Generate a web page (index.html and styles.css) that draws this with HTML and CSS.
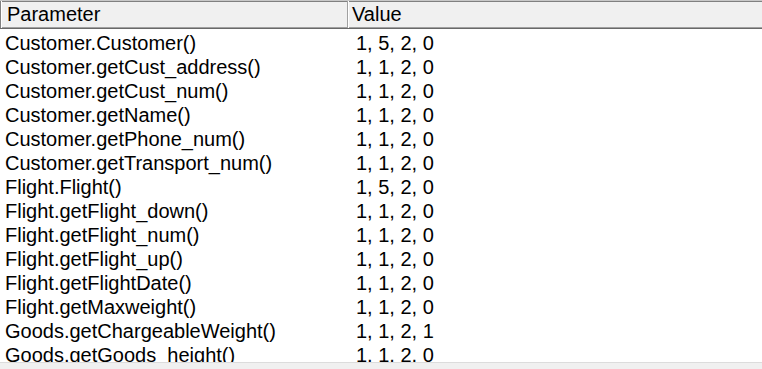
FILE: index.html
```html
<!DOCTYPE html>
<html>
<head>
<meta charset="utf-8">
<link rel="stylesheet" href="styles.css">
</head>
<body>
<div class="listview">
  <div class="header">
    <div class="hcell hcell-param">Parameter</div>
    <div class="hcell hcell-value">Value</div>
  </div>
  <div class="rows">
    <div class="row"><span class="c1">Customer.Customer()</span><span class="c2">1, 5, 2, 0</span></div>
    <div class="row"><span class="c1">Customer.getCust_address()</span><span class="c2">1, 1, 2, 0</span></div>
    <div class="row"><span class="c1">Customer.getCust_num()</span><span class="c2">1, 1, 2, 0</span></div>
    <div class="row"><span class="c1">Customer.getName()</span><span class="c2">1, 1, 2, 0</span></div>
    <div class="row"><span class="c1">Customer.getPhone_num()</span><span class="c2">1, 1, 2, 0</span></div>
    <div class="row"><span class="c1">Customer.getTransport_num()</span><span class="c2">1, 1, 2, 0</span></div>
    <div class="row"><span class="c1">Flight.Flight()</span><span class="c2">1, 5, 2, 0</span></div>
    <div class="row"><span class="c1">Flight.getFlight_down()</span><span class="c2">1, 1, 2, 0</span></div>
    <div class="row"><span class="c1">Flight.getFlight_num()</span><span class="c2">1, 1, 2, 0</span></div>
    <div class="row"><span class="c1">Flight.getFlight_up()</span><span class="c2">1, 1, 2, 0</span></div>
    <div class="row"><span class="c1">Flight.getFlightDate()</span><span class="c2">1, 1, 2, 0</span></div>
    <div class="row"><span class="c1">Flight.getMaxweight()</span><span class="c2">1, 1, 2, 0</span></div>
    <div class="row"><span class="c1">Goods.getChargeableWeight()</span><span class="c2">1, 1, 2, 1</span></div>
    <div class="row"><span class="c1">Goods.getGoods_height()</span><span class="c2">1, 1, 2, 0</span></div>
  </div>
  <div class="hscroll"></div>
</div>
</body>
</html>
```
FILE: styles.css
```css
html, body {
  margin: 0;
  padding: 0;
  background: #ffffff;
  overflow: hidden;
}
body {
  width: 762px;
  height: 369px;
  font-family: "Liberation Sans", Arial, sans-serif;
  font-size: 20px;
  color: #000000;
}
.listview {
  position: relative;
  width: 762px;
  height: 369px;
  overflow: hidden;
  display: flex;
  flex-direction: column;
}
.header {
  display: grid;
  grid-template-columns: 348px 414px;
  height: 29px;
  box-sizing: border-box;
  background: #f0f0f0;
  border-top: 1px solid #c8c8c8;
  border-bottom: 1px solid #696969;
  box-shadow: inset 0 1px 0 #808080, inset 0 -1px 0 #a0a0a0;
  flex: none;
}
.hcell {
  line-height: 27px;
  white-space: nowrap;
  box-sizing: border-box;
}
.hcell-param {
  border-left: 1px solid #808080;
  border-right: 1px solid #a0a0a0;
  box-shadow: inset 1px 0 0 #ffffff;
  padding-left: 6px;
}
.hcell-value {
  padding-left: 4px;
  box-shadow: inset 1px 0 0 #ffffff;
}
.rows {
  flex: 1;
  padding-top: 2px;
  overflow: hidden;
}
.row {
  display: grid;
  grid-template-columns: 351px 1fr;
  height: 24px;
  line-height: 24px;
  white-space: nowrap;
}
.c1 {
  padding-left: 5px;
  overflow: hidden;
}
.c2 {
  padding-left: 5px;
}
.hscroll {
  position: absolute;
  left: 0;
  right: 0;
  bottom: 0;
  height: 6px;
  background: #f0f0f0;
  border-top: 1px solid #dcdcdc;
}
```
